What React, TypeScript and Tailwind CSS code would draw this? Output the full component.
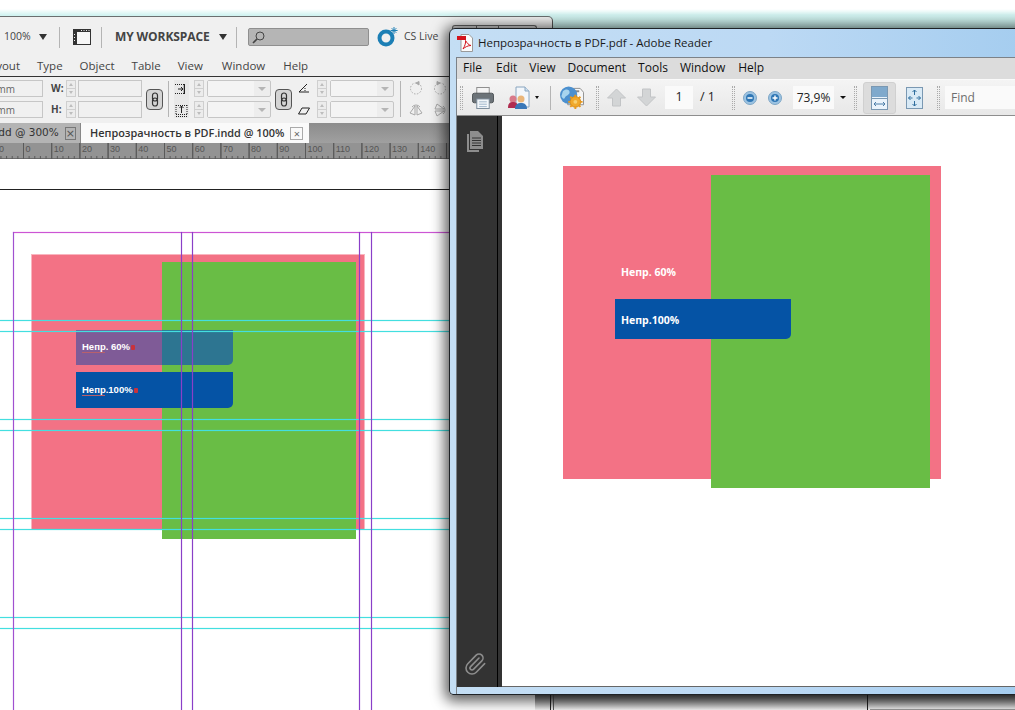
import React from "react";
import { Paperclip } from "lucide-react";

const Caret = ({ cls }: { cls: string }) => (
  <span className={`block w-0 h-0 shrink-0 border-x-transparent ${cls}`} />
);

const Sep = ({ cls }: { cls: string }) => <span className={`block w-px shrink-0 bg-[#b4b4b4] ${cls}`} />;

const Spinner = () => (
  <div className="flex flex-col w-[10px] h-[17px] shrink-0 border border-[#cfcfcf] bg-[#ececec]">
    <div className="flex-1 flex items-center justify-center border-b border-[#cfcfcf]">
      <Caret cls="border-x-[2.5px] border-b-[3px] border-b-[#bdbdbd]" />
    </div>
    <div className="flex-1 flex items-center justify-center">
      <Caret cls="border-x-[2.5px] border-t-[3px] border-t-[#bdbdbd]" />
    </div>
  </div>
);

const Drop = () => (
  <div className="w-[64px] h-[17px] shrink-0 border border-[#c6c6c6] rounded-[2px] bg-[#ededed] flex items-center">
    <div className="w-[46px] h-full bg-[#f4f4f4]" />
    <Caret cls="ml-[4px] border-x-[4px] border-t-[4px] border-t-[#b5b5b5]" />
  </div>
);

const Link = ({ cls }: { cls: string }) => (
  <div className={`w-[17px] h-[21px] shrink-0 rounded-[4px] border border-[#555] bg-[#d4d4d4] flex items-center justify-center ${cls}`}>
    <svg width="8" height="15" viewBox="0 0 8 15" fill="none" stroke="#333" strokeWidth="1.2">
      <rect x="1.5" y="1" width="5" height="8" rx="2.5" />
      <rect x="1.5" y="6" width="5" height="8" rx="2.5" />
    </svg>
  </div>
);

const Grip = ({ cls }: { cls: string }) => (
  <span className={`block w-[3px] h-[24px] shrink-0 border-x border-dotted border-[#aaa] ${cls}`} />
);

const Rot = ({ flip }: { flip?: boolean }) => (
  <svg width="14" height="14" viewBox="0 0 14 14" fill="none" stroke="#a8a8a8" strokeWidth="1" className={flip ? "-scale-x-100" : ""}>
    <circle cx="7" cy="7.5" r="5.5" strokeDasharray="1.5 1.5" />
    <path d="M7 2 L10 0.5 L10 4 Z" fill="#a8a8a8" />
  </svg>
);

const FlipI = ({ v }: { v?: boolean }) => (
  <svg width="14" height="14" viewBox="0 0 14 14" fill="none" stroke="#a8a8a8" strokeWidth="1" className={v ? "rotate-90" : ""}>
    <path d="M6 3 L1 10 L6 12 Z M8 3 L13 10 L8 12 Z" />
    <path d="M3 4 A5 5 0 0 1 11 4" />
  </svg>
);

function Indesign() {
  return (
    <div className="absolute left-0 top-[16px] w-[553px] h-[694px] bg-[#f0f0f0] border-t border-[#6b6f70] border-r border-r-[#555] rounded-tr-[5px] flex flex-col overflow-hidden font-['Open_Sans',sans-serif]">
      <div className="h-[40px] shrink-0 flex items-center text-[#444]">
        <span className="ml-[4px] text-[10.5px] w-[28px]">100%</span>
        <Caret cls="ml-[7px] border-x-[4px] border-t-[6px] border-t-[#333]" />
        <Sep cls="ml-[12px] h-[21px]" />
        <svg width="18" height="16" viewBox="0 0 18 16" className="ml-[13px] shrink-0">
          <rect x="0.5" y="0.5" width="17" height="15" fill="#f6f6f6" stroke="#333" />
          <rect x="0" y="0" width="18" height="3" fill="#333" />
          <rect x="0" y="0" width="4" height="16" fill="#333" />
          <path d="M8 1.5h1M10.5 1.5h1M13 1.5h1M15.5 1.5h1M1.5 5v1M1.5 8v1M1.5 11v1" stroke="#eee" />
        </svg>
        <Sep cls="ml-[10px] h-[21px]" />
        <span className="ml-[13px] text-[12px] font-bold text-[#444] w-[96px] whitespace-nowrap tracking-[-0.1px]">MY WORKSPACE</span>
        <Caret cls="ml-[8px] border-x-[4px] border-t-[6px] border-t-[#333]" />
        <Sep cls="ml-[9px] h-[21px]" />
        <div className="ml-[11px] w-[121px] h-[18px] shrink-0 rounded-[2px] bg-[#b5b5b5] border border-[#8f8f8f] flex items-center pl-[3px]">
          <svg width="13" height="13" viewBox="0 0 13 13" fill="none" stroke="#444" strokeWidth="1">
            <circle cx="8" cy="5" r="4" />
            <path d="M5 8 L1 12" strokeWidth="1.6" />
          </svg>
        </div>
        <svg width="21" height="20" viewBox="0 0 21 20" className="ml-[8px] shrink-0">
          <circle cx="9" cy="11" r="6.5" fill="none" stroke="#1c7fb5" strokeWidth="4" />
          <path d="M17 0v7M13.6 3.5h7M14.7 1.2l4.6 4.6M19.3 1.2l-4.6 4.6" stroke="#1c7fb5" strokeWidth="1" />
        </svg>
        <span className="ml-[6px] text-[10.5px] whitespace-nowrap">CS Live</span>
      </div>
      <div className="h-[20px] shrink-0 border-b border-[#333] flex items-center pb-[2px] text-[11.5px] text-[#444] whitespace-nowrap overflow-hidden">
        <span className="w-[20px] flex justify-end">yout</span>
        <span className="ml-[17px]">Type</span>
        <span className="ml-[17px]">Object</span>
        <span className="ml-[17px]">Table</span>
        <span className="ml-[17px]">View</span>
        <span className="ml-[19px]">Window</span>
        <span className="ml-[18px]">Help</span>
      </div>
      <div className="h-[46px] shrink-0 flex items-center pb-[2px] text-[10px] text-[#666]">
        <div className="flex flex-col gap-[4px] w-[43px] shrink-0">
          <div className="h-[17px] border border-l-0 border-[#c6c6c6] flex items-center justify-end pr-[27px] overflow-hidden leading-none">mm</div>
          <div className="h-[17px] border border-l-0 border-[#c6c6c6] flex items-center justify-end pr-[27px] overflow-hidden leading-none">mm</div>
        </div>
        <div className="ml-[8px] flex flex-col gap-[4px] w-[11px] text-[10px] font-bold text-[#444] leading-[17px]">
          <span>W:</span>
          <span>H:</span>
        </div>
        <div className="ml-[4px] flex flex-col gap-[4px]"><Spinner /><Spinner /></div>
        <div className="ml-[2px] flex flex-col gap-[4px]">
          <div className="w-[64px] h-[17px] border border-[#c6c6c6]" />
          <div className="w-[64px] h-[17px] border border-[#c6c6c6]" />
        </div>
        <Link cls="ml-[4px]" />
        <Sep cls="ml-[5px] h-[36px]" />
        <div className="ml-[5px] flex flex-col gap-[4px] w-[15px] shrink-0 bg-[#e8e8e8]">
          <svg width="15" height="17" viewBox="0 0 15 17" fill="none" stroke="#222"><path d="M1 4.5h9v9H1" strokeDasharray="1 1" /><path d="M10.5 4v10M4 9h5M7 7l2 2-2 2" /></svg>
          <svg width="15" height="17" viewBox="0 0 15 17" fill="none" stroke="#222"><path d="M2 13.5h11M2 15.5h11" strokeDasharray="1 1" /><path d="M2 4.5h11M2 4v9M13 4v9" strokeDasharray="1 1" /><path d="M7.5 12V5M5.5 7l2-2 2 2" /></svg>
        </div>
        <div className="ml-[5px] flex flex-col gap-[4px]"><Spinner /><Spinner /></div>
        <div className="ml-[3px] flex flex-col gap-[4px]"><Drop /><Drop /></div>
        <Link cls="ml-[4px]" />
        <div className="ml-[6px] flex flex-col gap-[4px] w-[12px] shrink-0">
          <svg width="12" height="17" viewBox="0 0 12 17" fill="none" stroke="#222"><path d="M1 12L9 4M1 12h10" /><path d="M7 8v4" strokeDasharray="1 1" /></svg>
          <svg width="12" height="17" viewBox="0 0 12 17" fill="none" stroke="#222"><path d="M0.5 13L4 7h7.5L8 13Z" /></svg>
        </div>
        <div className="ml-[7px] flex flex-col gap-[4px]"><Spinner /><Spinner /></div>
        <div className="ml-[3px] flex flex-col gap-[4px]"><Drop /><Drop /></div>
        <Sep cls="ml-[6px] h-[36px]" />
        <div className="ml-[8px] flex flex-col gap-[8px] shrink-0"><Rot /><FlipI /></div>
        <div className="ml-[10px] flex flex-col gap-[8px] shrink-0"><Rot flip /><FlipI v /></div>
      </div>
      <div className="h-[20px] shrink-0 flex bg-gradient-to-b from-[#8c8c8c] to-[#a0a0a0] font-['DejaVu_Sans',sans-serif] whitespace-nowrap">
        <div className="w-[81px] bg-[#b4b4b4] border-r border-[#888] flex items-center justify-end pr-[4px] text-[#333] text-[10.5px]">
          dd @ 300%
          <span className="ml-[6px] w-[13px] h-[13px] border border-[#777] text-[#555] flex items-center justify-center text-[11px] leading-none">×</span>
        </div>
        <div className="w-[228px] bg-[#fafafa] flex items-center pl-[9px] pt-px text-[10.9px] text-[#333] font-['Open_Sans',sans-serif] font-semibold">
          Непрозрачность в PDF.indd @ 100%
          <span className="ml-[6px] w-[13px] h-[13px] border border-[#aaa] text-[#666] flex items-center justify-center text-[11px] leading-none font-normal">×</span>
        </div>
      </div>
      <svg width="553" height="16" viewBox="0 0 553 16" className="shrink-0 block">
        <rect width="553" height="16" fill="#939393" />
        <path d="M0 15.5H553" stroke="#6a6a6a" />
        <g stroke="#5a5a5a">
          {Array.from({ length: 20 }, (_, i) => (
            <path key={i} d={`M${-4.7 + i * 28.2} 0V16`} />
          ))}
          {Array.from({ length: 110 }, (_, i) => (
            <path key={i} d={`M${-4.7 + i * 5.64} ${i % 5 === 0 ? 0 : 13}V16`} />
          ))}
        </g>
        <g fill="#555" fontSize="9" fontFamily="'Liberation Sans',sans-serif">
          {["0", "0", "10", "20", "30", "40", "50", "60", "70", "80", "90", "100", "110", "120", "130", "140", "150"].map((t, i) => (
            <text key={i} x={i === 0 ? -1 : -4.7 + i * 28.2 + 2} y="9">{t}</text>
          ))}
        </g>
      </svg>
      <div className="relative flex-1 bg-white overflow-hidden">
        <div className="absolute left-0 top-[30px] w-[450px] h-px bg-[#222]" />
        <div className="absolute left-[31px] top-[95px] w-[334px] h-[276px] bg-[#f37285] border border-[#f9b5bf]" />
        <div className="absolute left-[162px] top-[103px] w-[194px] h-[277px] bg-[#69bd45]" />
        <div className="absolute left-[76px] top-[171px] w-[157px] h-[35px] flex rounded-br-[5px] overflow-hidden">
          <div className="w-[86px] bg-[#7f5b97]" />
          <div className="flex-1 bg-[#2d7591]" />
        </div>
        <div className="absolute left-[76px] top-[213px] w-[157px] h-[36px] bg-[#0553a5] rounded-br-[5px]" />
        <span className="absolute left-[82px] top-[182px] text-[9.5px] font-bold leading-[12px] text-white whitespace-nowrap font-['Liberation_Sans',sans-serif]">Непр. 60%</span>
        <span className="absolute left-[131px] top-[186px] w-[4px] h-[5px] rounded-[1px] bg-[#c8323c]" />
        <span className="absolute left-[82px] top-[193px] w-[23px] h-px bg-[#b8606c]" />
        <span className="absolute left-[82px] top-[225px] text-[9.5px] font-bold leading-[12px] text-white whitespace-nowrap font-['Liberation_Sans',sans-serif]">Непр.100%</span>
        <span className="absolute left-[134px] top-[229px] w-[4px] h-[5px] rounded-[1px] bg-[#c8323c]" />
        <span className="absolute left-[82px] top-[236px] w-[23px] h-px bg-[#b8606c]" />

        <div className="absolute left-0 top-[161px] w-[450px] h-px bg-[#43dfe0] shadow-[0_0_1px_#43dfe0]" />
        <div className="absolute left-0 top-[172px] w-[450px] h-px bg-[#43dfe0] shadow-[0_0_1px_#43dfe0]" />
        <div className="absolute left-0 top-[260px] w-[450px] h-px bg-[#43dfe0] shadow-[0_0_1px_#43dfe0]" />
        <div className="absolute left-0 top-[271px] w-[450px] h-px bg-[#43dfe0] shadow-[0_0_1px_#43dfe0]" />
        <div className="absolute left-0 top-[359px] w-[450px] h-px bg-[#43dfe0] shadow-[0_0_1px_#43dfe0]" />
        <div className="absolute left-0 top-[370px] w-[450px] h-px bg-[#43dfe0] shadow-[0_0_1px_#43dfe0]" />
        <div className="absolute left-0 top-[458px] w-[450px] h-px bg-[#43dfe0] shadow-[0_0_1px_#43dfe0]" />
        <div className="absolute left-0 top-[469px] w-[450px] h-px bg-[#43dfe0] shadow-[0_0_1px_#43dfe0]" />

        <div className="absolute left-[13px] top-[73px] w-[440px] h-px bg-[#cc55d4] shadow-[0_0_1px_#cc55d4]" />
        <div className="absolute left-[13px] top-[73px] w-px h-[480px] bg-[#a050d0] shadow-[0_0_1px_#a050d0]" />
        <div className="absolute left-[181px] top-[73px] w-px h-[480px] bg-[#8a3fc8] shadow-[0_0_1px_#8a3fc8]" />
        <div className="absolute left-[192px] top-[73px] w-px h-[480px] bg-[#8a3fc8] shadow-[0_0_1px_#8a3fc8]" />
        <div className="absolute left-[359px] top-[73px] w-px h-[480px] bg-[#8a3fc8] shadow-[0_0_1px_#8a3fc8]" />
        <div className="absolute left-[371px] top-[73px] w-px h-[480px] bg-[#8a3fc8] shadow-[0_0_1px_#8a3fc8]" />

        <div className="absolute left-[535px] top-0 w-[15px] h-full bg-[#e6e6e6]" />
        <div className="absolute left-[550px] top-0 w-[3px] h-full border-l border-[#333] bg-[#f0f0f0]" />
      </div>
      <div className="absolute left-[452px] top-[8px] w-[85px] h-[8px] rounded-t-[3px] border border-b-0 border-[#666] bg-[#dcdcdc] flex">
        <div className="w-[24px] border-r border-[#666]" />
        <div className="w-[22px] border-r border-[#666]" />
      </div>
    </div>
  );
}

const PdfIcon = () => (
  <svg width="17" height="18" viewBox="0 0 17 18" className="shrink-0">
    <path d="M4 0.5H12L15.5 4V17.5H4Z" fill="#fbfbfb" stroke="#9a9a9a" />
    <rect x="0" y="2" width="9" height="4" fill="#d3141c" />
    <path d="M6 15C8 12 9 8 8.5 6.5C10 9 11.500 11 14 11.500C11 11.500 8 13 6 15Z" fill="none" stroke="#d3141c" strokeWidth="1" />
  </svg>
);

const Print = () => (
  <svg width="22" height="24" viewBox="0 0 23 24" className="shrink-0">
    <rect x="5" y="1" width="13" height="8" fill="#f4f4f4" stroke="#8a8a8a" />
    <rect x="0.500" y="7" width="22" height="10" rx="2" fill="#6c7378" stroke="#4e5356" />
    <rect x="5" y="13" width="13" height="10" fill="#f2f6fa" stroke="#7a8a99" />
    <path d="M7.500 16h8M7.500 18.500h8M7.500 21h8" stroke="#9db4c8" />
  </svg>
);

const People = () => (
  <svg width="22" height="24" viewBox="0 0 22 24" className="shrink-0">
    <path d="M8 1H17L21 5V21H8Z" fill="#f3f7fb" stroke="#8aa6c0" />
    <path d="M17 1V5H21" fill="#cfe0ef" stroke="#8aa6c0" />
    <circle cx="5" cy="13" r="3.500" fill="#d97a8a" />
    <path d="M0 22C0 17 2 16 5 16C8 16 10 17 10 22Z" fill="#b02c50" />
    <circle cx="13" cy="13" r="3.500" fill="#eab67a" />
    <path d="M7 23C7 18 10 17 13 17C16 17 19 18 19 23Z" fill="#3a78b8" />
  </svg>
);

const Globe = () => (
  <svg width="24" height="26" viewBox="0 0 25 26" className="shrink-0">
    <path d="M8 3H21L24.500 7V20H8Z" fill="#f6f6f6" stroke="#8f8f8f" />
    <rect x="11" y="5" width="9" height="2" fill="#888" />
    <circle cx="9" cy="10" r="9" fill="#4c90cf" />
    <path d="M3 6C6 3 10 4 10 7C10 10 6 10 5 13C4 15 2 13 1.500 11ZM12 13C14 12 16 13 15 15C14 17 12 17 12 13Z" fill="#a8d4ee" />
    <circle cx="16" cy="17" r="5.500" fill="#f0a92c" stroke="#d58814" />
    <path d="M16 9.500v3M16 21.500v3M8.500 17h3M20.500 17h3M10.700 11.700l2 2M19.300 20.300l2 2M21.300 11.700l-2 2M12.700 20.300l-2 2" stroke="#e89a1e" strokeWidth="2" />
    <circle cx="16" cy="17" r="2" fill="#f8d070" />
  </svg>
);

const Arrow = ({ down }: { down?: boolean }) => (
  <svg width="19" height="19" viewBox="0 0 19 19" className={`shrink-0 ${down ? "rotate-180" : ""}`}>
    <path d="M9.500 1L18.500 10H13.500V18H5.500V10H0.500Z" fill="#d3d5d6" stroke="#c2c4c6" />
  </svg>
);

const ZoomBtn = ({ plus, cls }: { plus?: boolean; cls: string }) => (
  <svg width="14" height="14" viewBox="0 0 14 14" className={`shrink-0 ${cls}`}>
    <circle cx="7" cy="7" r="6.500" fill="#9cc3e2" stroke="#7ea6c6" />
    <circle cx="7" cy="7" r="4" fill="#2f77b5" />
    <path d={plus ? "M4.500 7h5M7 4.500v5" : "M4.500 7h5"} stroke="#fff" strokeWidth="1.400" />
  </svg>
);

const FitWidth = () => (
  <svg width="17" height="24" viewBox="0 0 17 24">
    <rect x="0.500" y="0.500" width="16" height="23" fill="#eaf3fb" stroke="#7a98b2" />
    <rect x="1" y="1" width="15" height="10" fill="#7fa9cc" />
    <path d="M0.500 12.500h16" stroke="#7a98b2" />
    <path d="M3 18h11M3 18l2-2M3 18l2 2M14 18l-2-2M14 18l-2 2" stroke="#4d7ea8" fill="none" />
  </svg>
);

const FitPage = () => (
  <svg width="17" height="22" viewBox="0 0 17 22" className="shrink-0">
    <rect x="0.500" y="0.500" width="16" height="21" fill="#d9eaf6" stroke="#7a98b2" />
    <path d="M8.500 3v5M8.500 14v5M2.500 11h4M10.500 11h4M8.500 3l-2 2M8.500 3l2 2M8.500 19l-2-2M8.500 19l2-2M2.500 11l2-2M2.500 11l2 2M14.500 11l-2-2M14.500 11l-2 2" stroke="#2f6e9e" fill="none" />
  </svg>
);

function Reader() {
  return (
    <div className="absolute left-[449px] top-[28px] w-[640px] h-[667px] rounded-tl-[6px] rounded-bl-[4px] border border-[#1e2226] bg-gradient-to-r from-[#c4def4] via-[#bcd9f4] to-[#9fcaee] shadow-[0_2px_14px_4px_rgba(0,0,0,0.65)] flex flex-col font-['Open_Sans',sans-serif] overflow-hidden">
      <div className="h-[28px] shrink-0 flex items-center pl-[7px]">
        <PdfIcon />
        <span className="ml-[4px] text-[11.5px] text-[#1a1a1a] whitespace-nowrap">Непрозрачность в PDF.pdf - Adobe Reader</span>
      </div>
      <div className="flex-1 ml-[6px] flex flex-col border-t border-l border-[#7c8288] min-h-0">
        <div className="h-[21px] shrink-0 bg-[#dcdcdc] flex items-center pb-[2px] text-[12px] text-[#111] whitespace-nowrap">
          <span className="ml-[6px]">File</span>
          <span className="ml-[14px]">Edit</span>
          <span className="ml-[12px]">View</span>
          <span className="ml-[12px]">Document</span>
          <span className="ml-[12px]">Tools</span>
          <span className="ml-[12px]">Window</span>
          <span className="ml-[13px]">Help</span>
        </div>
        <div className="h-[37px] shrink-0 bg-gradient-to-b from-[#f4f4f4] to-[#e8e8e8] border-t border-[#fafafa] border-b border-b-[#8e8e8e] flex items-center text-[12.5px] text-[#222] whitespace-nowrap">
          <Grip cls="ml-[3px]" />
          <span className="ml-[9px] flex"><Print /></span>
          <span className="ml-[14px] flex"><People /></span>
          <Caret cls="ml-[5px] border-x-[2.5px] border-t-[3px] border-t-[#111]" />
          <Sep cls="ml-[11px] h-[24px]" />
          <span className="ml-[9px] flex"><Globe /></span>
          <Grip cls="ml-[12px]" />
          <span className="ml-[8px] flex"><Arrow /></span>
          <span className="ml-[11px] flex"><Arrow down /></span>
          <span className="ml-[9px] w-[28px] h-[23px] bg-[#fafafa] flex items-center justify-center">1</span>
          <span className="ml-[7px] w-[16px]">/ 1</span>
          <Grip cls="ml-[16px]" />
          <ZoomBtn cls="ml-[8px]" />
          <ZoomBtn plus cls="ml-[11px]" />
          <span className="ml-[11px] w-[41px] h-[23px] bg-[#fafafa] flex items-center justify-center text-[12px]">73,9%</span>
          <Caret cls="ml-[6px] border-x-[3px] border-t-[3px] border-t-[#111]" />
          <Grip cls="ml-[8px]" />
          <span className="ml-[6px] w-[33px] h-[32px] rounded-[3px] bg-[#dcdcdc] border border-[#d0d0d0] flex items-center justify-center"><FitWidth /></span>
          <span className="ml-[10px] flex"><FitPage /></span>
          <Grip cls="ml-[14px]" />
          <span className="ml-[5px] w-[100px] h-[23px] bg-[#fafafa] pl-[6px] flex items-center text-[#6e6e6e] text-[12px]">Find</span>
        </div>
        <div className="flex-1 flex min-h-0">
          <div className="w-[41px] shrink-0 bg-[#333333] border-r border-black flex flex-col items-center justify-between pt-[15px] pb-[11px] pr-[4px]">
            <svg width="18" height="21" viewBox="0 0 18 21" fill="#8d8d8d">
              <path d="M4 0H12L17 5V18H4Z" />
              <path d="M1 3H3V19H13V21H1Z" />
              <path d="M6 7h9M6 9.500h9M6 12h9M6 14.500h9" stroke="#333" />
            </svg>
            <Paperclip size={24} strokeWidth={1.6} className="text-[#8d8d8d]" />
          </div>
          <div className="w-[4px] shrink-0 bg-[#333333]" />
          <div className="relative flex-1 bg-white border-b border-[#666]">
            <div className="absolute left-[61px] top-[50px] w-[378px] h-[313px] bg-[#f37285]" />
            <div className="absolute left-[209px] top-[59px] w-[219px] h-[313px] bg-[#69bd45]" />
            <div className="absolute left-[113px] top-[183px] w-[176px] h-[40px] bg-[#0553a5] rounded-br-[5px]" />
            <span className="absolute left-[119px] top-[149px] text-[10.5px] font-bold leading-[15px] text-white whitespace-nowrap">Непр. 60%</span>
            <span className="absolute left-[119px] top-[197px] text-[10.5px] font-bold leading-[15px] text-white whitespace-nowrap">Непр.100%</span>
          </div>
        </div>
        <div className="h-[7px] shrink-0" />
      </div>
    </div>
  );
}

export default function App() {
  return (
    <div className="relative w-[1015px] h-[710px] overflow-hidden bg-white">
      <div className="h-[30px] bg-gradient-to-b from-white from-[30%] via-[#d2f3f1] via-[50%] to-[#c4ece8]" />
      <Indesign />
      <div className="absolute left-[535px] top-[695px] w-[480px] h-[15px] bg-gradient-to-b from-[#666] to-[#f4f4f4] flex">
        <div className="ml-[15px] w-px h-full bg-[#222]" />
        <div className="ml-[2px] w-px h-full bg-[#555]" />
        <div className="ml-[313px] w-px h-full bg-[#222]" />
        <div className="flex-1 flex items-end pl-[2px]">
          <div className="w-full h-px bg-[#999]" />
        </div>
      </div>
      <Reader />
    </div>
  );
}
